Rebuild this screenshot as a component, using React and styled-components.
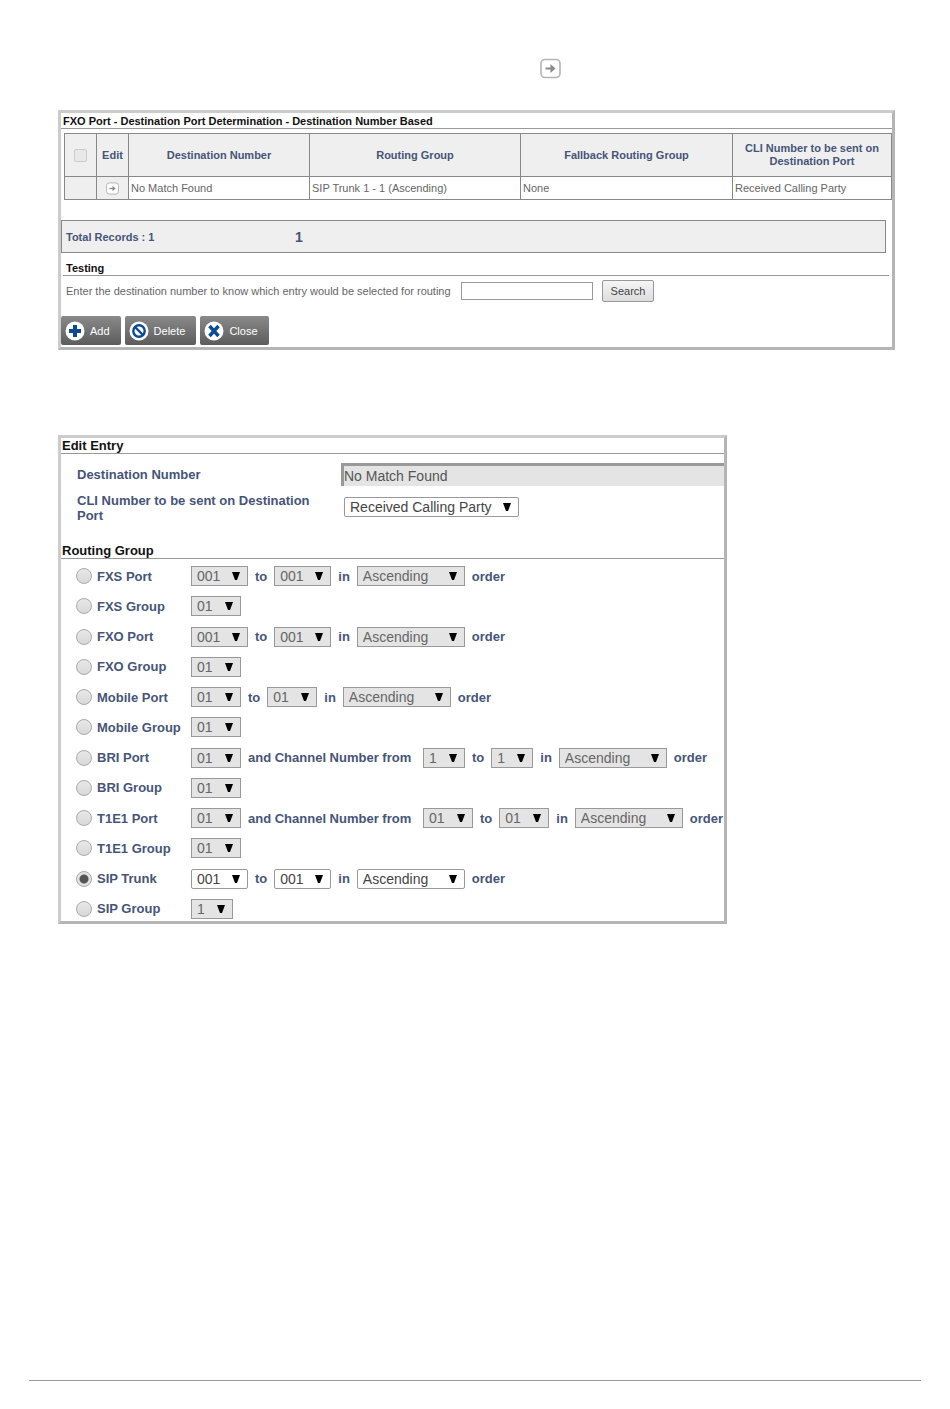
import { useState } from "react"
import styled, { createGlobalStyle } from "styled-components"

const ROUTES = [
    { name: "FXS Port", parts: [["001"], "to", ["001"], "in", ["Ascending"], "order"] },
    { name: "FXS Group", parts: [["01"]] },
    { name: "FXO Port", parts: [["001"], "to", ["001"], "in", ["Ascending"], "order"] },
    { name: "FXO Group", parts: [["01"]] },
    { name: "Mobile Port", parts: [["01"], "to", ["01"], "in", ["Ascending"], "order"] },
    { name: "Mobile Group", parts: [["01"]] },
    { name: "BRI Port", parts: [["01"], "and Channel Number from", ["1"], "to", ["1"], "in", ["Ascending"], "order"] },
    { name: "BRI Group", parts: [["01"]] },
    { name: "T1E1 Port", parts: [["01"], "and Channel Number from", ["01"], "to", ["01"], "in", ["Ascending"], "order"] },
    { name: "T1E1 Group", parts: [["01"]] },
    { name: "SIP Trunk", parts: [["001"], "to", ["001"], "in", ["Ascending"], "order"] },
    { name: "SIP Group", parts: [["1"]] },
]

const SELECT_WIDTHS = { "1": 42, "01": 50, "001": 57, "Ascending": 108 }

function ArrowIcon({ size }) {
    return (
        <svg width={size} height={size} viewBox="0 0 21 21" fill="none">
            <rect x="1" y="1.5" width="19" height="18" rx="4" fill="#fff" stroke="#b4b4b4" strokeWidth="1.6" />
            <path d="M5.5 10.5H13" stroke="#888" strokeWidth="2" />
            <path d="M10.5 6l5 4.5-5 4.5z" fill="#888" />
        </svg>
    )
}

function ActionIcon({ kind }) {
    return (
        <svg width="20" height="20" viewBox="0 0 20 20" fill="none">
            <circle cx="10" cy="10" r="9.5" fill="#fff" />
            {kind === "add" && <path d="M10 4v12M4 10h12" stroke="#0d4a94" strokeWidth="4" />}
            {kind === "delete" && (
                <>
                    <circle cx="10" cy="10" r="5.7" stroke="#0d4a94" strokeWidth="2.4" />
                    <path d="M6 6l8 8" stroke="#0d4a94" strokeWidth="2.4" />
                </>
            )}
            {kind === "close" && <path d="M5.5 5l9 10M14.5 5l-9 10" stroke="#0d4a94" strokeWidth="3.4" />}
        </svg>
    )
}

function RouteRow({ route, checked, onSelect }) {
    return (
        <Route>
            <RouteName>
                <Radio type="radio" name="route" checked={checked} onChange={onSelect} />
                {route.name}
            </RouteName>
            {route.parts.map((part, ind) =>
                Array.isArray(part) ? (
                    <Select key={ind} $width={SELECT_WIDTHS[part[0]]} disabled={!checked} aria-label={`${route.name} ${ind + 1}`}>
                        {part.map((option) => <option key={option}>{option}</option>)}
                    </Select>
                ) : (
                    <Word key={ind} $long={part.length > 5}>{part}</Word>
                )
            )}
        </Route>
    )
}

export default function App() {
    const [selected, setSelected] = useState("SIP Trunk")

    return (
        <Page>
            <GlobalStyle />
            <Main>
                <Intro>
                    <ArrowIcon size={21} />
                </Intro>

                <Panel>
                    <Title>FXO Port - Destination Port Determination - Destination Number Based</Title>
                    <Table>
                        <colgroup>
                            <col width="32" />
                            <col width="32" />
                            <col width="181" />
                            <col width="211" />
                            <col width="212" />
                            <col width="159" />
                        </colgroup>
                        <thead>
                            <tr>
                                <th><Checkbox type="checkbox" aria-label="Select all" disabled /></th>
                                <th>Edit</th>
                                <th>Destination Number</th>
                                <th>Routing Group</th>
                                <th>Fallback Routing Group</th>
                                <th>CLI Number to be sent on Destination Port</th>
                            </tr>
                        </thead>
                        <tbody>
                            <tr>
                                <ShadedCell />
                                <ShadedCell>
                                    <EditButton type="button" aria-label="Edit"><ArrowIcon size={13} /></EditButton>
                                </ShadedCell>
                                <td>No Match Found</td>
                                <td>SIP Trunk 1 - 1 (Ascending)</td>
                                <td>None</td>
                                <td>Received Calling Party</td>
                            </tr>
                        </tbody>
                    </Table>
                    <Records>
                        <span>Total Records : 1</span>
                        <PageNumber>1</PageNumber>
                    </Records>
                    <TestingTitle>Testing</TestingTitle>
                    <TestingRow>
                        <label htmlFor="testNumber">Enter the destination number to know which entry would be selected for routing</label>
                        <TestInput type="text" id="testNumber" />
                        <SearchButton type="button">Search</SearchButton>
                    </TestingRow>
                    <Actions>
                        <ActionButton type="button"><ActionIcon kind="add" />Add</ActionButton>
                        <ActionButton type="button"><ActionIcon kind="delete" />Delete</ActionButton>
                        <ActionButton type="button"><ActionIcon kind="close" />Close</ActionButton>
                    </Actions>
                </Panel>

                <EditPanel>
                    <EditTitle>Edit Entry</EditTitle>
                    <Fields>
                        <label htmlFor="destination">Destination Number</label>
                        <NumberInput type="text" id="destination" defaultValue="No Match Found" disabled />
                        <label htmlFor="cli">CLI Number to be sent on Destination Port</label>
                        <CliCell>
                            <Select id="cli" $width={175}>
                                <option>Received Calling Party</option>
                            </Select>
                        </CliCell>
                    </Fields>
                    <EditTitle>Routing Group</EditTitle>
                    <Routes>
                        {ROUTES.map((route) => (
                            <RouteRow
                                key={route.name}
                                route={route}
                                checked={selected === route.name}
                                onSelect={() => setSelected(route.name)}
                            />
                        ))}
                    </Routes>
                </EditPanel>
            </Main>
            <Footer />
        </Page>
    )
}

const GlobalStyle = createGlobalStyle`
*{
    box-sizing: border-box;
}
body{
    margin: 0;
    background-color: #fff;
    font-family: "Liberation Sans", Arial, sans-serif;
}
input, select, button{
    font-family: inherit;
    margin: 0;
}
`
const Page = styled.div`
min-height: 100vh;
display: flex;
flex-direction: column;
`
const Main = styled.main`
padding: 58px 55px 40px 58px;
`
const Intro = styled.div`
height: 52px;
padding-left: 482px;
`
// grey frame shared by both windows
const Panel = styled.section`
border: 3px solid #b5b5b5;
border-top-color: #ccc;
border-left-color: #ccc;
font-size: 11px;
color: #666;
`
const Title = styled.h2`
margin: 0 0 4px;
padding: 2px 0 0 2px;
border-bottom: 1px solid #999;
font-size: 11px;
line-height: 13px;
color: #111;
`
const Table = styled.table`
width: calc(100% - 3px);
margin-left: 3px;
table-layout: fixed;
border-collapse: collapse;
th, td{
    border: 1px solid #888;
}
th{
    height: 43px;
    padding: 0 8px;
    background-color: #efefef;
    color: #465578;
    line-height: 13px;
}
td{
    height: 23px;
    padding: 0 2px;
}
th:nth-child(-n+2){
    padding: 0;
}
`
const ShadedCell = styled.td`
background-color: #efefef;
text-align: center;
`
const Checkbox = styled.input`
appearance: none;
display: block;
width: 13px;
height: 13px;
margin: 0 auto;
border: 1px solid #ccc;
border-radius: 2px;
background-color: #e8e8e8;
`
const EditButton = styled.button`
display: block;
margin: 0 auto;
padding: 0;
border: none;
background: none;
svg{
    display: block;
}
`
const Records = styled.div`
height: 33px;
margin: 20px 6px 0 0;
padding-left: 4px;
display: flex;
align-items: center;
border: 1px solid #888;
background-color: #efefef;
font-weight: bold;
color: #465578;
span:first-child{
    width: 229px;
}
`
const PageNumber = styled.span`
font-size: 14px;
`
const TestingTitle = styled.h3`
margin: 9px 3px 0 2px;
padding-left: 3px;
border-bottom: 1px solid #999;
font-size: 11px;
line-height: 13px;
color: #111;
`
const TestingRow = styled.div`
margin-top: 4px;
padding-left: 5px;
display: flex;
align-items: center;
label{
    width: 395px;
    white-space: nowrap;
}
`
const TestInput = styled.input`
width: 132px;
height: 18px;
border: 1px solid #999;
`
const SearchButton = styled.button`
width: 52px;
height: 22px;
margin-left: 9px;
padding: 0;
border: 1px solid #999;
border-radius: 2px;
background: linear-gradient(#f6f6f6, #dcdcdc);
font-size: 11px;
color: #444;
`
const Actions = styled.div`
display: flex;
gap: 4px;
padding: 14px 0 2px;
`
const ActionButton = styled.button`
height: 29px;
padding: 0 11px 0 4px;
display: flex;
align-items: center;
gap: 5px;
border: none;
border-radius: 2px;
background: linear-gradient(#8a8a8a, #5c5c5c);
font-size: 11px;
color: #fff;
`
const EditPanel = styled(Panel)`
max-width: 669px;
margin-top: 85px;
padding-bottom: 1px;
font-size: 13px;
font-weight: bold;
color: #465578;
`
const EditTitle = styled.h2`
margin: 0;
padding-left: 1px;
border-bottom: 1px solid #999;
font-size: 13px;
line-height: 15px;
color: #111;
`
const Fields = styled.div`
display: grid;
grid-template-columns: 264px 1fr;
row-gap: 7px;
padding: 9px 0 20px 16px;
label{
    padding-right: 20px;
    line-height: 15px;
    align-self: center;
}
`
const NumberInput = styled.input`
width: 100%;
height: 23px;
padding: 0;
border: solid #999;
border-width: 3px 0 0 3px;
background-color: #e4e4e4;
font-size: 14px;
color: #555;
`
const CliCell = styled.div`
padding: 4px 0 0 3px;
`
const Select = styled.select`
appearance: none;
display: block;
flex: none;
width: ${(props) => props.$width}px;
height: 20px;
padding: 0 0 0 5px;
border: 1px solid #999;
border-radius: 2px;
background: #fff url("data:image/svg+xml,%3Csvg xmlns='http://www.w3.org/2000/svg' width='8' height='8'%3E%3Cpath d='M0 0h8l-3 8h-2z'/%3E%3C/svg%3E") no-repeat right 7px center;
font-size: 14px;
color: #444;
&:disabled{
    border-radius: 0;
    background-color: #e4e4e4;
    color: #666;
    opacity: 1;
}
`
// the rows share the height so that they stay evenly spread
const Routes = styled.div`
min-height: 361px;
padding: 6px 0 0 15px;
display: flex;
flex-direction: column;
justify-content: space-between;
`
const Route = styled.div`
height: 22px;
display: flex;
align-items: center;
gap: 7px;
white-space: nowrap;
`
const RouteName = styled.label`
width: 108px;
flex: none;
display: flex;
align-items: center;
gap: 5px;
`
const Radio = styled.input`
appearance: none;
flex: none;
width: 16px;
height: 16px;
border: 1px solid #aaa;
border-radius: 50%;
background: linear-gradient(#e8e8e8, #d8d8d8);
&:checked{
    background: radial-gradient(circle, #555 0 4px, #e2e2e2 5px);
}
`
const Word = styled.span`
min-width: ${(props) => (props.$long ? "168px" : "auto")};
`
const Footer = styled.footer`
margin: auto 29px 28px;
border-top: 1px solid #999;
`
